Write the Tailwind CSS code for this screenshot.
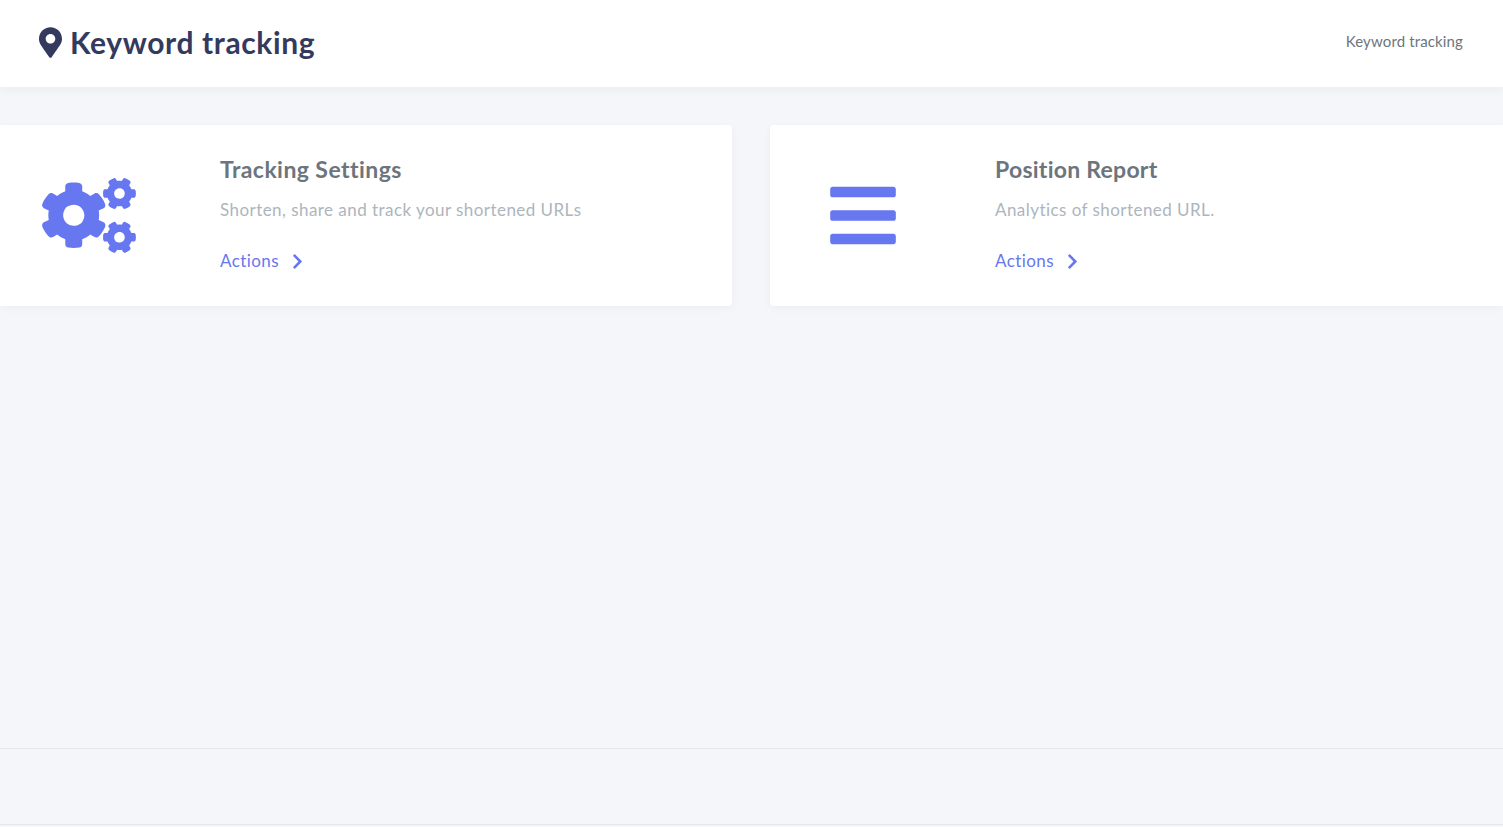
<!DOCTYPE html>
<html lang="en">
<head>
<meta charset="utf-8">
<title>Keyword tracking</title>
<script src="https://cdn.jsdelivr.net/npm/@tailwindcss/browser@4"></script>
</head>
<body class="bg-[#f4f6fa] font-['Lato','Open_Sans',sans-serif]">
<div class="h-[827px] overflow-hidden flex flex-col">
  <header class="h-[87px] shrink-0 bg-white shadow-[0_2px_10px_rgba(0,0,0,0.05)] flex items-center justify-between pl-[39px] pr-[40px]">
    <div class="flex items-center gap-[8px] -mt-[3px]">
      <svg class="w-[23px] h-[31px] text-[#343a5e]" viewBox="0 0 384 512" fill="currentColor"><path d="M172.268 501.67C26.97 291.031 0 269.413 0 192 0 85.961 85.961 0 192 0s192 85.961 192 192c0 77.413-26.97 99.031-172.268 309.67-9.535 13.774-29.93 13.773-39.464 0zM192 272c44.183 0 80-35.817 80-80s-35.817-80-80-80-80 35.817-80 80 35.817 80 80 80z"/></svg>
      <h1 class="text-[30px] font-bold leading-none tracking-[0.62px] text-[#343a5e]">Keyword tracking</h1>
    </div>
    <span class="text-[15px] tracking-[0.13px] -mt-[5px] text-[#6c757d]">Keyword tracking</span>
  </header>
  <main class="pt-[38px] grid grid-cols-[732px_1fr] gap-[38px] h-[661px] shrink-0 content-start">
    <section class="h-[181px] bg-white rounded-r-[4px] shadow-[0_2px_10px_rgba(0,0,0,0.04)] flex items-center pl-[42px]">
      <svg class="w-[94px] h-[75px] text-[#6777ef] shrink-0" viewBox="0 0 640 512" fill="currentColor"><path d="M512.1 191l-8.2 14.3c-3 5.3-9.4 7.5-15.1 5.4-11.8-4.4-22.6-10.7-32.1-18.6-4.6-3.8-5.8-10.5-2.8-15.7l8.2-14.3c-6.9-8-12.3-17.3-15.9-27.4h-16.5c-6 0-11.2-4.3-12.2-10.3-2-12-2.1-24.6 0-37.1 1-6 6.2-10.4 12.2-10.4h16.5c3.6-10.1 9-19.4 15.9-27.4l-8.2-14.3c-3-5.2-1.9-11.9 2.8-15.7 9.5-7.9 20.4-14.2 32.1-18.6 5.7-2.1 12.1.1 15.1 5.4l8.2 14.3c10.5-1.9 21.2-1.9 31.7 0L552 6.3c3-5.3 9.4-7.5 15.1-5.4 11.8 4.4 22.6 10.7 32.1 18.6 4.6 3.8 5.8 10.5 2.8 15.7l-8.2 14.3c6.9 8 12.3 17.3 15.9 27.4h16.5c6 0 11.2 4.3 12.2 10.3 2 12 2.1 24.6 0 37.1-1 6-6.2 10.4-12.2 10.4h-16.5c-3.6 10.1-9 19.4-15.9 27.4l8.2 14.3c3 5.2 1.9 11.9-2.8 15.7-9.5 7.9-20.4 14.2-32.1 18.6-5.7 2.1-12.1-.1-15.1-5.4l-8.2-14.3c-10.4 1.9-21.2 1.9-31.7 0zm-10.5-58.8c38.5 29.6 82.4-14.3 52.8-52.8-38.5-29.7-82.4 14.3-52.8 52.8zM386.3 286.1l33.7 16.8c10.1 5.8 14.5 18.1 10.5 29.1-8.9 24.2-26.4 46.4-42.6 65.8-7.4 8.9-20.2 11.1-30.3 5.3l-29.1-16.8c-16 13.7-34.6 24.6-54.9 31.7v33.6c0 11.6-8.3 21.6-19.7 23.6-24.6 4.2-50.4 4.4-75.9 0-11.5-2-20-11.9-20-23.6V418c-20.3-7.2-38.9-18-54.9-31.7L74 403c-10 5.8-22.9 3.6-30.3-5.3-16.2-19.4-33.3-41.6-42.2-65.7-4-10.9.4-23.2 10.5-29.1l33.3-16.8c-3.9-20.9-3.9-42.4 0-63.4L12 205.8c-10.1-5.8-14.6-18.1-10.5-29 8.9-24.2 26-46.4 42.2-65.8 7.4-8.9 20.2-11.1 30.3-5.3l29.1 16.8c16-13.7 34.6-24.6 54.9-31.7V57.1c0-11.5 8.2-21.5 19.6-23.5 24.6-4.2 50.5-4.4 76-.1 11.5 2 20 11.9 20 23.6v33.6c20.3 7.2 38.9 18 54.9 31.7l29.1-16.8c10-5.8 22.9-3.6 30.3 5.3 16.2 19.4 33.2 41.6 42.1 65.8 4 10.9.1 23.2-10 29.1l-33.7 16.8c3.9 21 3.9 42.5 0 63.5zm-117.6 21.1c59.2-77-28.7-164.9-105.7-105.7-59.2 77 28.7 164.9 105.7 105.7zm243.4 182.7l-8.2 14.3c-3 5.3-9.4 7.5-15.1 5.4-11.8-4.4-22.6-10.7-32.1-18.6-4.6-3.8-5.8-10.5-2.8-15.7l8.2-14.3c-6.9-8-12.3-17.3-15.9-27.4h-16.5c-6 0-11.2-4.3-12.2-10.3-2-12-2.1-24.6 0-37.1 1-6 6.2-10.4 12.2-10.4h16.5c3.6-10.1 9-19.4 15.9-27.4l-8.2-14.3c-3-5.2-1.9-11.9 2.8-15.7 9.5-7.9 20.4-14.2 32.1-18.6 5.7-2.1 12.1.1 15.1 5.4l8.2 14.3c10.5-1.9 21.2-1.9 31.7 0l8.2-14.3c3-5.3 9.4-7.5 15.1-5.4 11.8 4.4 22.6 10.7 32.1 18.6 4.6 3.8 5.8 10.5 2.8 15.7l-8.2 14.3c6.9 8 12.3 17.3 15.9 27.4h16.5c6 0 11.2 4.3 12.2 10.3 2 12 2.1 24.6 0 37.1-1 6-6.2 10.4-12.2 10.4h-16.5c-3.6 10.1-9 19.4-15.9 27.4l8.2 14.3c3 5.2 1.9 11.9-2.8 15.7-9.5 7.9-20.4 14.2-32.1 18.6-5.7 2.1-12.1-.1-15.1-5.4l-8.2-14.3c-10.4 1.9-21.2 1.9-31.7 0zM501.6 431c38.5 29.6 82.4-14.3 52.8-52.8-38.5-29.6-82.4 14.3-52.8 52.8z"/></svg>
      <div class="ml-[84px] -mt-[1px]">
        <h2 class="text-[23px] font-bold leading-[30px] tracking-[0.43px] text-[#6c757d]">Tracking Settings</h2>
        <p class="mt-[11px] text-[17px] leading-[30px] tracking-[0.45px] text-[#adb5bd]">Shorten, share and track your shortened URLs</p>
        <a class="mt-[21px] flex items-center text-[17px] leading-[30px] tracking-[0.43px] text-[#6777ef]">Actions<svg class="ml-[13px] w-[11px] h-[17px]" viewBox="0 0 320 512" fill="currentColor"><path d="M285.476 272.971L91.132 467.314c-9.373 9.373-24.569 9.373-33.941 0l-22.667-22.667c-9.357-9.357-9.375-24.522-.04-33.901L188.505 256 34.484 101.255c-9.335-9.379-9.317-24.544.04-33.901l22.667-22.667c9.373-9.373 24.569-9.373 33.941 0L285.475 239.03c9.373 9.372 9.373 24.568.001 33.941z"/></svg></a>
      </div>
    </section>
    <section class="h-[181px] bg-white rounded-l-[4px] shadow-[0_2px_10px_rgba(0,0,0,0.04)] flex items-center pl-[60px]">
      <svg class="w-[66px] h-[75px] text-[#6777ef] shrink-0" viewBox="0 0 448 512" fill="currentColor"><path d="M16 132h416c8.837 0 16-7.163 16-16V76c0-8.837-7.163-16-16-16H16C7.163 60 0 67.163 0 76v40c0 8.837 7.163 16 16 16zm0 160h416c8.837 0 16-7.163 16-16v-40c0-8.837-7.163-16-16-16H16c-8.837 0-16 7.163-16 16v40c0 8.837 7.163 16 16 16zm0 160h416c8.837 0 16-7.163 16-16v-40c0-8.837-7.163-16-16-16H16c-8.837 0-16 7.163-16 16v40c0 8.837 7.163 16 16 16z"/></svg>
      <div class="ml-[99px] -mt-[1px]">
        <h2 class="text-[23px] font-bold leading-[30px] tracking-[0.25px] text-[#6c757d]">Position Report</h2>
        <p class="mt-[11px] text-[17px] leading-[30px] tracking-[0.45px] text-[#adb5bd]">Analytics of shortened URL.</p>
        <a class="mt-[21px] flex items-center text-[17px] leading-[30px] tracking-[0.43px] text-[#6777ef]">Actions<svg class="ml-[13px] w-[11px] h-[17px]" viewBox="0 0 320 512" fill="currentColor"><path d="M285.476 272.971L91.132 467.314c-9.373 9.373-24.569 9.373-33.941 0l-22.667-22.667c-9.357-9.357-9.375-24.522-.04-33.901L188.505 256 34.484 101.255c-9.335-9.379-9.317-24.544.04-33.901l22.667-22.667c9.373-9.373 24.569-9.373 33.941 0L285.475 239.03c9.373 9.372 9.373 24.568.001 33.941z"/></svg></a>
      </div>
    </section>
  </main>
  <footer class="h-[76px] shrink-0 border-t border-[#e2e5ec]"></footer>
  <div class="border-t border-[#e2e5ec] h-[3px]"></div>
</div>
</body>
</html>
